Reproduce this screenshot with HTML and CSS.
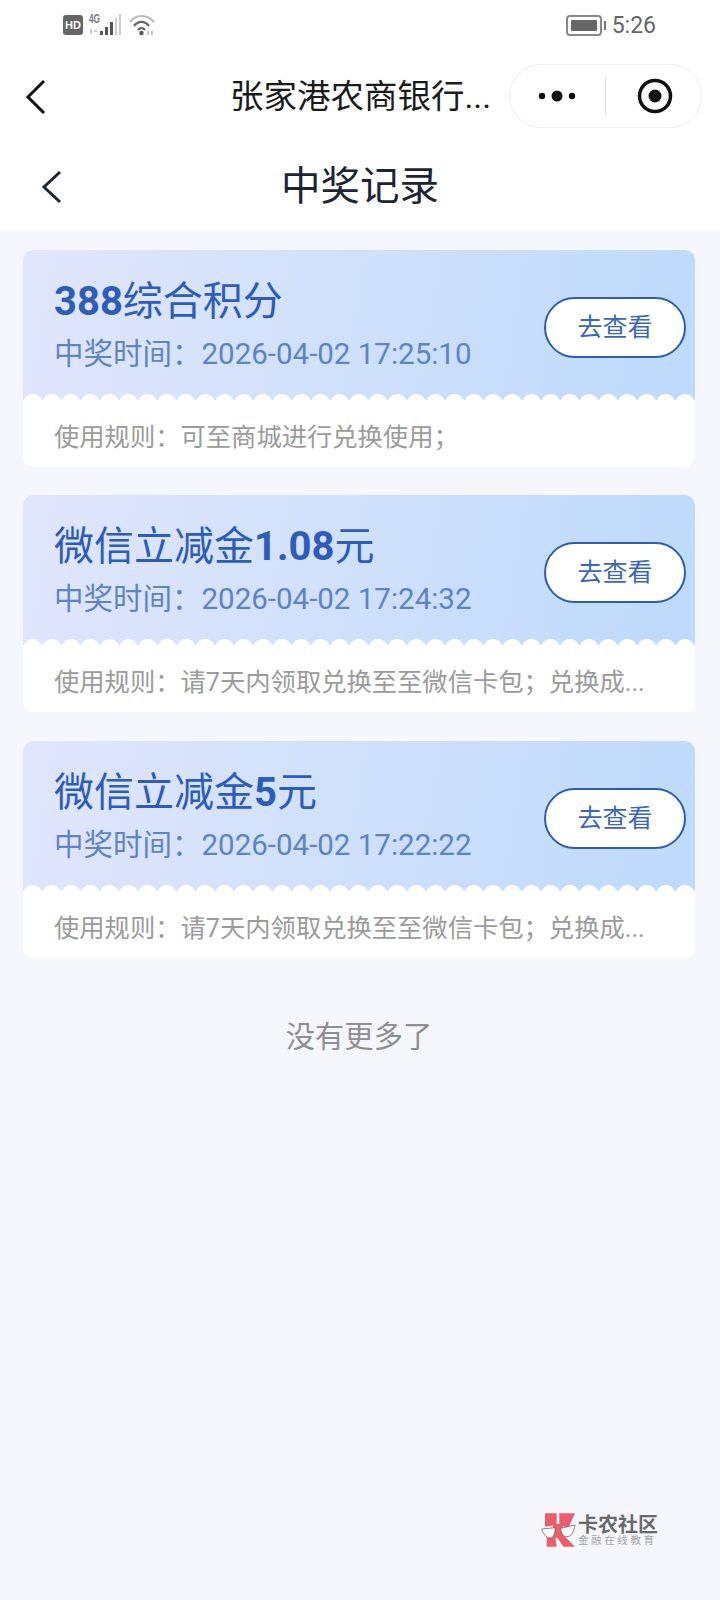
FILE: index.html
```html
<!DOCTYPE html>
<html lang="zh-CN">
<head>
<meta charset="utf-8">
<title>中奖记录</title>
<link rel="stylesheet" href="styles.css">
</head>
<body>
<div class="top">
  <div class="status">
    <div class="status-left">
      <span class="hd">HD</span>
      <svg class="signal" width="36" height="26" viewBox="0 0 36 26">
        <text x="1" y="11" class="sig-text" textLength="11" lengthAdjust="spacingAndGlyphs">4G</text>
        <path d="M3 17v5M6 19h3" stroke="#bbb" stroke-width="1.500"/>
        <rect x="12" y="19" width="3" height="4" fill="#555"/>
        <rect x="17" y="15" width="3" height="8" fill="#555"/>
        <rect x="22" y="10" width="3" height="13" fill="#555"/>
        <rect x="27" y="6" width="2" height="17" fill="#ccc"/>
        <rect x="31" y="2" width="2" height="21" fill="#ccc"/>
      </svg>
      <svg class="wifi" width="26" height="22" viewBox="0 0 26 22" fill="none">
        <path d="M1 8C7 0 18 0 25 8" stroke="#bbb" stroke-width="2.200"/>
        <path d="M5 12C9 6.500 16 6.500 20 12" stroke="#666" stroke-width="2.200"/>
        <path d="M9 16C11 13.500 14 13.500 16 16" stroke="#666" stroke-width="2.200"/>
        <circle cx="12.500" cy="19" r="2.200" fill="#555"/>
        <path d="M19 17v4M23 17v4" stroke="#aaa" stroke-width="1.300"/>
      </svg>
    </div>
    <div class="status-right">
      <span class="battery"><span class="battery-fill"></span></span>
      <span class="battery-tip"></span>
      <span class="clock">5:26</span>
    </div>
  </div>
  <div class="mini-nav">
    <svg class="mini-back" width="24" height="36" viewBox="0 0 24 36" fill="none">
      <path d="M20 2L4 18L20 34" stroke="#111" stroke-width="3"/>
    </svg>
    <div class="mini-title">张家港农商银行...</div>
    <div class="capsule">
      <svg class="dots" width="40" height="12" viewBox="0 0 40 12">
        <circle cx="4" cy="6" r="3.200" fill="#111"/>
        <circle cx="19" cy="6" r="5.500" fill="#111"/>
        <circle cx="34" cy="6" r="3.200" fill="#111"/>
      </svg>
      <span class="capsule-line"></span>
      <svg class="target" width="36" height="36" viewBox="0 0 36 36">
        <circle cx="18" cy="18" r="15.500" fill="none" stroke="#111" stroke-width="3.500"/>
        <circle cx="18" cy="18" r="6.500" fill="#111"/>
      </svg>
    </div>
  </div>
  <div class="page-head">
    <svg class="page-back" width="22" height="34" viewBox="0 0 22 34" fill="none">
      <path d="M19 2L3 17L19 32" stroke="#1d2433" stroke-width="3"/>
    </svg>
    <h1 class="page-title">中奖记录</h1>
  </div>
</div>

<main class="list">
  <article class="card">
    <div class="card-head">
      <div class="card-info">
        <div class="card-title"><b>388</b>综合积分</div>
        <div class="card-time">中奖时间：2026-04-02 17:25:10</div>
      </div>
      <button class="card-btn">去查看</button>
    </div>
    <div class="card-foot"><div class="card-rule">使用规则：可至商城进行兑换使用；</div></div>
  </article>
  <article class="card">
    <div class="card-head">
      <div class="card-info">
        <div class="card-title">微信立减金<b>1.08</b>元</div>
        <div class="card-time">中奖时间：2026-04-02 17:24:32</div>
      </div>
      <button class="card-btn">去查看</button>
    </div>
    <div class="card-foot"><div class="card-rule">使用规则：请7天内领取兑换至至微信卡包；兑换成...</div></div>
  </article>
  <article class="card">
    <div class="card-head">
      <div class="card-info">
        <div class="card-title">微信立减金<b>5</b>元</div>
        <div class="card-time">中奖时间：2026-04-02 17:22:22</div>
      </div>
      <button class="card-btn">去查看</button>
    </div>
    <div class="card-foot"><div class="card-rule">使用规则：请7天内领取兑换至至微信卡包；兑换成...</div></div>
  </article>
  <div class="no-more">没有更多了</div>
</main>

<div class="watermark">
  <svg class="wm-logo" width="36" height="36" viewBox="0 0 36 36">
    <path d="M4 1.300H15.700V13L4 14.700Z" fill="#ea5f6e"/>
    <path d="M18.300 1.300H34L27.300 16L18.300 13Z" fill="#ea5f6e"/>
    <path d="M5.700 23H14L15.700 34.700H5.700Z" fill="#ea5f6e"/>
    <path d="M15.700 24.700L22.300 23L34 34.700H22.300Z" fill="#ea5f6e"/>
    <rect x="12" y="12" width="10" height="14" fill="#ea5f6e"/>
    <path d="M0.700 17L14 15.700C14.500 22 12 26 9 26C5 26 2.500 22 0.700 17Z" fill="#fff" stroke="#666" stroke-width="0.800"/>
    <path d="M19.700 16.300L34 13C33 20 30 24.700 25.700 24.700C22 24.700 20 21 19.700 16.300Z" fill="#fff" stroke="#666" stroke-width="0.800"/>
  </svg>
  <div class="wm-text">
    <div class="wm-name">卡农社区</div>
    <div class="wm-sub">金融在线教育</div>
  </div>
</div>
</body>
</html>
```
FILE: styles.css
```css
* { box-sizing: border-box; }
html, body { margin: 0; padding: 0; }
body {
  position: relative;
  width: 720px;
  height: 1600px;
  overflow: hidden;
  background: #f5f7fc;
  font-family: Roboto, "Noto Sans CJK SC", sans-serif;
}
.top { background: #fff; height: 230px; display: flow-root; }

.status {
  height: 50px;
  padding: 0 64px 0 63px;
  display: flex;
  justify-content: space-between;
  align-items: center;
}
.status-left { display: flex; align-items: center; gap: 5px; }
.hd {
  width: 20px;
  height: 20px;
  border-radius: 3px;
  background: #666;
  color: #fff;
  font: 700 11px/20px "Liberation Sans", sans-serif;
  text-align: center;
}
.sig-text { font: 700 13px "Liberation Sans", sans-serif; fill: #777; }
.status-right { display: flex; align-items: center; }
.battery {
  width: 36px;
  height: 21px;
  padding: 3px;
  border: 2px solid #888;
  border-radius: 4px;
  display: block;
}
.battery-fill { display: block; height: 100%; background: #666; border-radius: 1px; }
.battery-tip { width: 2px; height: 9px; margin-left: 2px; background: #777; }
.clock { margin-left: 6px; font-size: 23px; color: #666; }

.mini-nav {
  height: 64px;
  margin-top: 15px;
  padding: 0 18px 0 24px;
  display: flex;
  align-items: center;
}
.mini-back { flex: none; }
.mini-title {
  margin-left: 182px;
  width: 270px;
  flex: none;
  font-size: 33.500px;
  line-height: 44px;
  color: #1a1a1a;
  white-space: nowrap;
}
.capsule {
  margin-left: auto;
  margin-bottom: 2px;
  width: 193px;
  height: 64px;
  flex: none;
  border: 1px solid #eee;
  border-radius: 32px;
  display: flex;
  align-items: center;
  padding-left: 28px;
}
.dots { flex: none; }
.capsule-line { width: 1px; height: 38px; margin-left: 27px; background: #e2e2e2; }
.target { margin-left: 31px; flex: none; }

.page-head {
  height: 68px;
  margin-top: 24px;
  padding-left: 41px;
  display: flex;
  align-items: center;
}
.page-title {
  margin: 0 0 0 218px;
  font-size: 39.500px;
  line-height: 56px;
  font-weight: 400;
  color: #1d2433;
}

.list { padding: 20px 25px 0 23px; }
.card {
  height: 217px;
  margin-bottom: 28.400px;
  border-radius: 10px;
  overflow: hidden;
  background: #fff;
  display: flex;
  flex-direction: column;
}
.card-head {
  height: 150px;
  padding: 24px 9px 0 31px;
  background: linear-gradient(100deg, #e1e6fc 0%, #cfe0fb 50%, #bedafc 100%);
  display: flex;
  justify-content: space-between;
}
.card-title {
  font-size: 40px;
  line-height: 56px;
  color: #2e5cb8;
  white-space: nowrap;
}
.card-title b { font-weight: 700; }
.card-time {
  margin-top: 1px;
  font-size: 29.500px;
  line-height: 46px;
  color: #5f84c4;
  white-space: nowrap;
}
.card-btn {
  flex: none;
  width: 142px;
  height: 61px;
  margin-top: 23px;
  padding: 0;
  border: 2px solid #2e5cb0;
  border-radius: 31px;
  background: #fff;
  color: #3a66b8;
  font: 400 25px/1 Roboto, "Noto Sans CJK SC", sans-serif;
}
.card-foot {
  position: relative;
  flex: 1;
  padding: 18px 30px 0 31px;
}
.card-foot::before {
  content: "";
  position: absolute;
  left: 0;
  right: 0;
  top: -6px;
  height: 8px;
  background-image: radial-gradient(circle at 9.600px 9.600px, #fff 9.200px, rgba(255,255,255,0) 9.900px);
  background-size: 19.200px 19.200px;
  background-repeat: repeat-x;
}
.card-rule {
  font-size: 25.300px;
  line-height: 40px;
  color: #9b9b9b;
  white-space: nowrap;
}
.no-more {
  margin-top: 57px;
  text-align: center;
  font-size: 29.300px;
  line-height: 44px;
  color: #8f8f8f;
}

.watermark {
  position: absolute;
  left: 541px;
  top: 1512px;
  display: flex;
  align-items: center;
  gap: 1px;
}
.wm-name {
  font: 700 20px/20px "Noto Sans CJK SC", sans-serif;
  color: #6a6a6a;
  white-space: nowrap;
}
.wm-sub {
  font: 400 10.500px/12px "Noto Sans CJK SC", sans-serif;
  letter-spacing: 2.600px;
  color: #a4a4a4;
  white-space: nowrap;
}
```
